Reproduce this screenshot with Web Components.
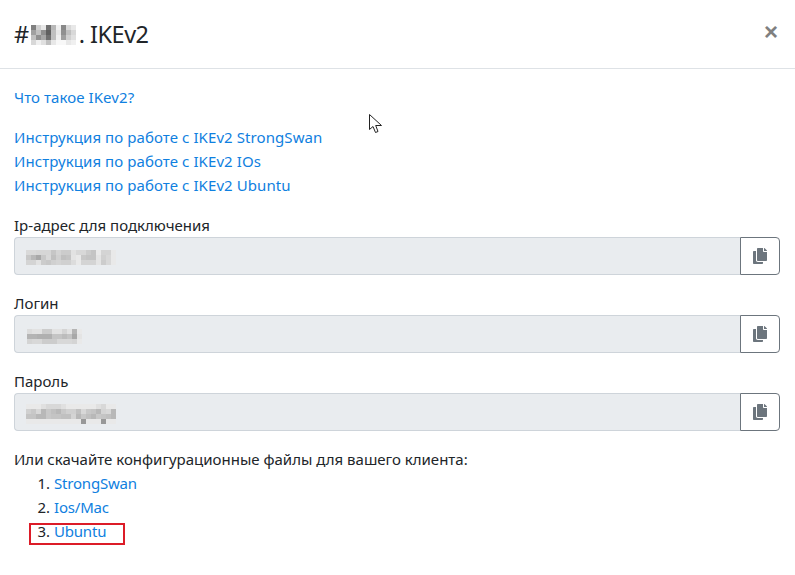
<!DOCTYPE html>
<html><head><meta charset="utf-8">
<style>
html,body{margin:0;padding:0;background:#fff}
body{font-family:"Noto Sans","Open Sans",sans-serif;color:#212529}
</style></head><body>
<x-modal>
  <x-modal-header slot="header"></x-modal-header>
  <x-link-row style="margin-top:16px"><a-l>Что такое IKev2?</a-l></x-link-row>
  <x-link-row style="margin-top:16px"><a-l>Инструкция по работе с IKEv2 StrongSwan</a-l></x-link-row>
  <x-link-row><a-l>Инструкция по работе с IKEv2 IOs</a-l></x-link-row>
  <x-link-row><a-l>Инструкция по работе с IKEv2 Ubuntu</a-l></x-link-row>
  <x-field label="Ip-адрес для подключения" pad="13px 0 0 12px" style="margin-top:16px">
    <x-mosaic rows="d9 d9 d6 d6 d6 c6 d4 cc cc e2 d8 d8 cc c4 e9 d4 d4 e9|c8 b8 a8 c8 d8 c0 d0 c0 c4 e4 e9 c8 c4 c4 e4 d0 d8 e9|d4 d4 e2 cc c8 d0 d4 d0 d0 dc e9 d4 d4 d4 e4 cc d8 e9"></x-mosaic>
  </x-field>
  <x-field label="Логин" pad="14px 0 0 13px">
    <x-mosaic rows="dc e2 e2 cc cc e2 e2 d4 e2 b4 e9|b4 b4 b0 b0 b0 c4 c4 bc c4 a8 e4|d4 d8 d8 cc cc cc d8 d8 d8 d4 e9"></x-mosaic>
  </x-field>
  <x-field label="Пароль" pad="11px 0 0 12px">
    <x-mosaic rows="e9 e9 e9 e0 d8 d8 d8 e0 e9 e9 e9 e9 e9 e9 e0 d8 e9 e9|d0 c8 d8 b8 c8 c0 b8 c8 d0 d0 c0 d8 c8 c4 b8 d4 d8 b8|c4 c4 b8 b8 c8 c4 c4 c0 c0 d4 b8 c8 c0 b8 c8 c4 c0 b8|e9 e9 e9 e9 e9 e9 e9 e9 e9 e9 e9 98 e9 e9 e9 98 e9 e9"></x-mosaic>
  </x-field>
  <x-downloads></x-downloads>
</x-modal>
<script>
customElements.define('x-mosaic',class extends HTMLElement{connectedCallback(){if(this.shadowRoot)return;
const rows=this.getAttribute('rows').split('|').map(r=>r.split(' '));const s=5;
let rects='';rows.forEach((r,y)=>r.forEach((c,x)=>{rects+=`<rect x="${x*s}" y="${y*s}" width="${s}" height="${s}" fill="#${c}${c}${c}"/>`}));
const w=rows[0].length*s,h=rows.length*s;
this.attachShadow({mode:'open'}).innerHTML=`<style>:host{display:inline-flex;vertical-align:top}svg{display:block}</style><svg width="${w}" height="${h}" viewBox="0 0 ${w} ${h}" shape-rendering="crispEdges">${rects}</svg>`}});
customElements.define('x-modal',class extends HTMLElement{constructor(){super();this.attachShadow({mode:'open'}).innerHTML=`<style>:host{display:block;width:795px;height:575px;overflow:hidden;position:relative;box-sizing:border-box;font-size:15px;line-height:24px;color:#212529}
.b{padding:0 15px 0 14px}
svg{position:absolute;left:369px;top:114px}</style><slot name="header"></slot><div class="b"><slot></slot></div>
<svg width="14" height="20" viewBox="0 0 14 20"><path d="M.5.5V15.5L4 12.5 6.5 18.5 9 17.5 6.7 11.5H12.5Z" fill="#fff" stroke="#222" stroke-width="1"/></svg>`}});
customElements.define('x-modal-header',class extends HTMLElement{constructor(){super();this.attachShadow({mode:'open'}).innerHTML=`<style>:host{display:flex;align-items:center;justify-content:space-between;height:69px;box-sizing:border-box;border-bottom:1px solid #dee2e6;padding:0 17px 5px 14px}
h5{margin:0;font-size:23.5px;letter-spacing:-.5px;font-weight:400;line-height:30px;display:flex;align-items:center;color:#212529;margin-top:5px}
.m{margin:1px 3px 0 2px;display:flex}
.x{font-size:24px;font-weight:700;color:#808080;line-height:1;font-family:"Liberation Sans",sans-serif}</style>
<h5>#<x-mosaic class="m" rows="80 d0 e8 70 b8 f0 88 d8 e8|a0 c0 90 60 c0 e8 90 c0 d8|c0 90 a8 70 c0 f0 a0 d0 e0|d8 f0 e0 c0 e8 f8 f8 e8 f0"></x-mosaic>. IKEv2</h5><span class="x">×</span>`}});
customElements.define('a-l',class extends HTMLElement{constructor(){super();this.attachShadow({mode:'open'}).innerHTML=`<style>:host{display:inline;color:#0f80e0;letter-spacing:.08px}</style><slot></slot>`}});
customElements.define('x-link-row',class extends HTMLElement{constructor(){super();this.attachShadow({mode:'open'}).innerHTML=`<style>:host{display:block}</style><slot></slot>`}});
customElements.define('x-field',class extends HTMLElement{connectedCallback(){if(this.shadowRoot)return;this.attachShadow({mode:'open'}).innerHTML=`<style>:host{display:block;margin-bottom:16px}
.i{display:flex;height:38px}
.c{flex:1;background:#e9ecef;border:1px solid #ced4da;border-radius:4px 0 0 4px;border-right:0;box-sizing:border-box;padding:${this.getAttribute('pad')};display:flex;align-items:flex-start}
.c ::slotted(*){margin-top:-1px;margin-left:-1px}
button{width:40px;margin:0;padding:0;background:#fff;border:1px solid #6c757d;border-radius:0 4px 4px 0;display:flex;align-items:center;justify-content:center}</style>
<div>${this.getAttribute('label')}</div><div class="i"><div class="c"><slot></slot></div><button><svg width="14" height="16" viewBox="0 0 448 512"><path fill="#6c757d" d="M320 448v40c0 13.255-10.745 24-24 24H24c-13.255 0-24-10.745-24-24V120c0-13.255 10.745-24 24-24h72v296c0 30.879 25.121 56 56 56h168zm0-344V0H152c-13.255 0-24 10.745-24 24v368c0 13.255 10.745 24 24 24h272c13.255 0 24-10.745 24-24V128H344c-13.2 0-24-10.8-24-24zm120.971-31.029L375.029 7.029A24 24 0 0 0 358.059 0H352v96h96v-6.059a24 24 0 0 0-7.029-16.97z"/></svg></button></div>`}});
customElements.define('x-downloads',class extends HTMLElement{constructor(){super();this.attachShadow({mode:'open'}).innerHTML=`<style>:host{display:block}ol{margin:0;padding:0 0 0 40px}a{color:#0f80e0;letter-spacing:-.2px}.r{position:absolute;left:29px;top:523px;width:96px;height:22px;box-sizing:border-box;border:2px solid #dc1c28}</style>
<div>Или скачайте конфигурационные файлы для вашего клиента:</div><ol><li><a>StrongSwan</a></li><li><a>Ios/Mac</a></li><li><a>Ubuntu</a></li></ol><div class="r"></div>`}});
</script></body></html>
